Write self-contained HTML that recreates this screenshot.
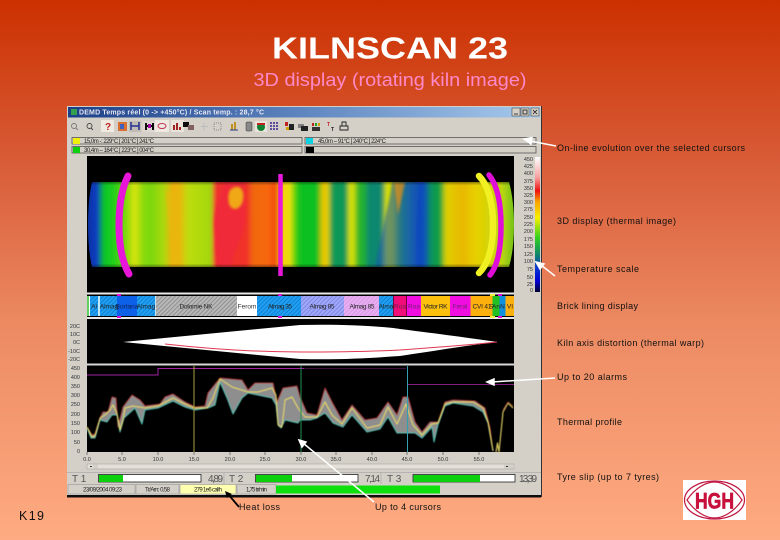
<!DOCTYPE html>
<html><head><meta charset="utf-8"><title>KILNSCAN 23</title>
<style>
html,body{margin:0;padding:0;width:780px;height:540px;overflow:hidden;background:#e8764e}
svg{display:block}
text{font-family:"Liberation Sans",sans-serif}
.lb{font-size:9px;fill:#111}
.ax{font-size:5.5px;fill:#333}
.st{font-size:6px;fill:#222}
.big{font-size:10px;fill:#555}
</style></head><body>
<svg width="780" height="540" viewBox="0 0 780 540" xmlns="http://www.w3.org/2000/svg">
<defs>
<linearGradient id="bg" x1="0" y1="0" x2="0" y2="1"><stop offset="0" stop-color="#cc3000"/><stop offset=".3" stop-color="#d85c38"/><stop offset=".6" stop-color="#ec8a62"/><stop offset="1" stop-color="#ffab82"/></linearGradient>
<linearGradient id="tb" x1="0" y1="0" x2="1" y2="0"><stop offset="0" stop-color="#1c3f88"/><stop offset=".5" stop-color="#5f86c0"/><stop offset="1" stop-color="#a8cbec"/></linearGradient>
<linearGradient id="kiln" x1="87" y1="0" x2="514" y2="0" gradientUnits="userSpaceOnUse">
<stop offset="0" stop-color="#0830a0"/><stop offset=".026" stop-color="#0840c8"/><stop offset=".033" stop-color="#08a040"/><stop offset=".042" stop-color="#08c828"/><stop offset=".066" stop-color="#28d018"/><stop offset=".096" stop-color="#90dc08"/><stop offset=".112" stop-color="#e0e408"/><stop offset=".129" stop-color="#90dc08"/><stop offset=".148" stop-color="#78d808"/><stop offset=".183" stop-color="#b0d808"/><stop offset=".199" stop-color="#f0b008"/><stop offset=".218" stop-color="#e8b808"/><stop offset=".234" stop-color="#c0dc08"/><stop offset=".293" stop-color="#a0d808"/><stop offset=".297" stop-color="#f03030"/><stop offset=".377" stop-color="#f03028"/><stop offset=".386" stop-color="#f06810"/><stop offset=".424" stop-color="#f86808"/><stop offset=".443" stop-color="#f04808"/><stop offset=".452" stop-color="#f0c808"/><stop offset=".475" stop-color="#f0e010"/><stop offset=".489" stop-color="#40d010"/><stop offset=".499" stop-color="#10c020"/><stop offset=".541" stop-color="#10c020"/><stop offset=".550" stop-color="#e8c000"/><stop offset=".564" stop-color="#e8d000"/><stop offset=".574" stop-color="#109858"/><stop offset=".607" stop-color="#109858"/><stop offset=".614" stop-color="#d8e000"/><stop offset=".623" stop-color="#d8e000"/><stop offset=".637" stop-color="#20b030"/><stop offset=".651" stop-color="#20b030"/><stop offset=".658" stop-color="#108870"/><stop offset=".691" stop-color="#108870"/><stop offset=".700" stop-color="#d8e000"/><stop offset=".716" stop-color="#d8d800"/><stop offset=".733" stop-color="#30a050"/><stop offset=".756" stop-color="#2070a0"/><stop offset=".773" stop-color="#1048c0"/><stop offset=".792" stop-color="#1050b8"/><stop offset=".803" stop-color="#109060"/><stop offset=".827" stop-color="#10a040"/><stop offset=".84" stop-color="#e0d000"/><stop offset=".88" stop-color="#e8b800"/><stop offset=".91" stop-color="#e8d000"/><stop offset=".97" stop-color="#c0d810"/><stop offset="1" stop-color="#70c018"/>
</linearGradient>
<linearGradient id="shade" x1="0" y1="0" x2="0" y2="1"><stop offset="0" stop-color="#000" stop-opacity=".4"/><stop offset=".04" stop-color="#000" stop-opacity="0"/><stop offset=".96" stop-color="#000" stop-opacity="0"/><stop offset="1" stop-color="#000" stop-opacity=".4"/></linearGradient>
<linearGradient id="scale" x1="0" y1="0" x2="0" y2="1"><stop offset="0" stop-color="#fff"/><stop offset=".15" stop-color="#f8a0a0"/><stop offset=".25" stop-color="#f01010"/><stop offset=".33" stop-color="#f8a000"/><stop offset=".45" stop-color="#f8f000"/><stop offset=".6" stop-color="#30d020"/><stop offset=".72" stop-color="#108868"/><stop offset=".82" stop-color="#0838d0"/><stop offset=".92" stop-color="#0000d0"/><stop offset="1" stop-color="#000030"/></linearGradient>
<pattern id="h1" width="3" height="3" patternUnits="userSpaceOnUse" patternTransform="rotate(45)"><rect width="3" height="3" fill="#20a0f0"/><rect width="1" height="3" fill="#1080d8"/></pattern>
<pattern id="h2" width="3" height="3" patternUnits="userSpaceOnUse" patternTransform="rotate(45)"><rect width="3" height="3" fill="#a0a8f8"/><rect width="1" height="3" fill="#8088e8"/></pattern>
<pattern id="h3" width="3" height="3" patternUnits="userSpaceOnUse" patternTransform="rotate(45)"><rect width="3" height="3" fill="#e8b0f0"/><rect width="1" height="3" fill="#d898e8"/></pattern>
<pattern id="h4" width="3" height="3" patternUnits="userSpaceOnUse" patternTransform="rotate(45)"><rect width="3" height="3" fill="#b8b8b8"/><rect width="1" height="3" fill="#909090"/></pattern>
<filter id="b2" x="-20%" y="-20%" width="140%" height="140%"><feGaussianBlur stdDeviation="1.2"/></filter>
<filter id="bk" x="-2%" y="-2%" width="104%" height="104%"><feGaussianBlur stdDeviation="2 0"/></filter>
<filter id="b1" x="-2%" y="-2%" width="104%" height="104%"><feGaussianBlur stdDeviation=".35"/></filter>
<filter id="b3" x="-2%" y="-10%" width="104%" height="120%"><feGaussianBlur stdDeviation=".5"/></filter>
<clipPath id="kc"><path d="M92 182H509Q514 200 514 225Q514 250 509 267H92Q88 250 88 225Q88 200 92 182Z"/></clipPath>
</defs>
<rect width="780" height="540" fill="url(#bg)"/>

<text x="272" y="58.500" font-size="30.500" font-weight="700" fill="#fff" textLength="236" lengthAdjust="spacingAndGlyphs">KILNSCAN 23</text>
<text x="253.500" y="86" font-size="18.500" fill="#ff88c8" textLength="273" lengthAdjust="spacingAndGlyphs">3D display (rotating kiln image)</text>

<g filter="url(#b1)">
<rect x="67" y="106" width="474" height="391" fill="#d4d0c8"/>
<rect x="67" y="495" width="474" height="2.500" fill="#111"/>
<rect x="541" y="106" width="1" height="391" fill="#333"/>
<rect x="68" y="107" width="472" height="10.500" fill="url(#tb)"/>
<rect x="71" y="109" width="6" height="6" fill="#30a050"/>
<text x="79" y="114.500" font-size="7" font-weight="700" fill="#e8e8f0" textLength="185">DEMD Temps réel (0 -&gt; +450°C) / Scan temp. : 28,7 °C</text>
<g fill="#d4d0c8" stroke="#333" stroke-width=".5"><rect x="512" y="108" width="8" height="8"/><rect x="521" y="108" width="8" height="8"/><rect x="531" y="108" width="8" height="8"/></g>
<path d="M514 114h4M523 110h4v4h-4zM533 110l4 4M537 110l-4 4" stroke="#111" fill="none" stroke-width=".8"/>

<!-- toolbar -->
<g fill="none" stroke="#777" stroke-width=".9"><circle cx="74" cy="126" r="2.500"/><path d="M76 128l2 2"/><circle cx="89.500" cy="126" r="2.500" stroke="#444"/><path d="M91 128l2 2" stroke="#444"/></g>
<rect x="101" y="120" width="13" height="12" fill="#eeeae2"/><text x="105" y="130" font-size="10" font-weight="700" fill="#c02020">?</text>
<rect x="118" y="122" width="9" height="9" fill="#d87030"/><rect x="120" y="124" width="4" height="5" fill="#4060c0"/>
<rect x="129" y="121" width="12" height="11" fill="#c0bcb4"/><path d="M131 122v8M139 122v8M131 126h8" stroke="#203090" stroke-width="1.500"/>
<rect x="143" y="121" width="13" height="11" fill="#dcd8d0"/><path d="M146 123v7M153 123v7M146 126h7" stroke="#101010" stroke-width="2"/><rect x="148" y="124" width="3" height="4" fill="#a000a0"/>
<rect x="155" y="120" width="14" height="12" fill="#eeeae2"/><ellipse cx="162" cy="126" rx="4" ry="2.500" fill="none" stroke="#c03050"/>
<rect x="171" y="120" width="13" height="12" fill="#e8e4dc"/><path d="M173 130v-5h2v5zM176 130v-7h2v7zM179 130v-3h2v3z" fill="#a02020"/>
<rect x="183" y="122" width="6" height="5" fill="#101010"/><rect x="188" y="125" width="6" height="5" fill="#806060"/>
<path d="M204 123v7M201 126.500h7" stroke="#bbb" fill="none"/>
<rect x="214" y="123" width="7" height="7" fill="none" stroke="#888" stroke-dasharray="1 1"/>
<path d="M231 130v-6h2v6zM234 130v-8h2v8z" fill="#c09020"/><path d="M230 130h8" stroke="#204090"/>
<rect x="246" y="122" width="6" height="9" rx="1" fill="#888" stroke="#333" stroke-width=".5"/>
<rect x="255" y="121" width="12" height="11" fill="#e8e4dc"/><circle cx="261" cy="127" r="4" fill="#108030"/><path d="M257 124h8" stroke="#c02020" stroke-width="2"/>
<path d="M270 123h9M270 126h9M270 129h9" stroke="#302090" stroke-width="1.500" stroke-dasharray="2 1"/>
<rect x="285" y="122" width="3" height="4" fill="#c02020"/><rect x="289" y="124" width="5" height="6" fill="#202020"/><rect x="286" y="127" width="3" height="3" fill="#d0a000"/>
<rect x="298" y="124" width="6" height="4" fill="#808080"/><rect x="301" y="126" width="7" height="5" fill="#202020"/>
<rect x="312" y="123" width="2" height="3" fill="#c02020"/><rect x="315" y="123" width="2" height="3" fill="#20a020"/><rect x="318" y="123" width="2" height="3" fill="#d0a000"/><rect x="312" y="127" width="8" height="4" fill="#333"/>
<text x="327" y="126" font-size="5" font-weight="700" fill="#c02020">T</text><text x="331" y="131" font-size="5" font-weight="700" fill="#222">T</text>
<path d="M340 130v-4h8v4zM342 126v-4h4v4z" fill="none" stroke="#222" stroke-width=".9"/>

<!-- legends -->
<g fill="#d4d0c8" stroke="#555" stroke-width=".8"><rect x="72" y="137.500" width="230" height="6.500"/><rect x="72" y="146.500" width="230" height="6.500"/><rect x="305" y="137.500" width="231" height="6.500"/><rect x="305" y="146.500" width="231" height="6.500"/></g>
<rect x="73" y="138" width="7" height="6" fill="#f0f010"/><rect x="73" y="147" width="7" height="6" fill="#10d010"/><rect x="306" y="138" width="7" height="6" fill="#10d0e0"/><rect x="306" y="147" width="8" height="6" fill="#000"/>
<text x="84" y="143" class="st" textLength="70">15,0m -: 229°C [ 201°C ] 241°C</text>
<text x="84" y="152" class="st" textLength="70">30,4m -- 164°C [ 223°C ] 004°C</text>
<text x="318" y="143" class="st" textLength="68">45,0m -- 91°C [ 240°C ] 224°C</text>

<!-- black panels -->
<rect x="87" y="156" width="427" height="296" fill="#000"/>

<!-- kiln -->
<g clip-path="url(#kc)">
<rect x="70" y="170" width="460" height="110" fill="url(#kiln)" filter="url(#bk)"/>
<path d="M225 182C218 200 212 215 215 235C215 250 216 260 218 267H232C232 258 236 250 240 240C246 225 248 205 243 182Z" fill="#f02c38" filter="url(#b2)"/>
<path d="M230 190C238 183 245 188 243 200C241 210 232 212 229 204C228 198 228 194 230 190Z" fill="#f0a818" filter="url(#b2)"/>
<path d="M165 190C172 195 180 190 183 190L178 225L183 265H172L170 230Z" fill="#e8b808" opacity=".55" filter="url(#b2)"/>
<path d="M392 182C390 200 385 215 375 267H412C414 240 418 205 420 182Z" fill="#1858b0" opacity=".55" filter="url(#b2)"/>
<path d="M394 182H405L398 215Z" fill="#f09010" opacity=".7" filter="url(#b2)"/>
<rect x="87" y="182" width="427" height="85" fill="url(#shade)"/>
</g>
<path d="M128 176C121 190 119 208 119 225C119 242 121 260 129 274" stroke="#e814d8" stroke-width="7" fill="none" stroke-linecap="round"/>
<path d="M280.500 174V276" stroke="#e814d8" stroke-width="4.500" fill="none"/>
<path d="M479 176C489 186 493 205 493 225C493 245 489 263 479 273" stroke="#f0f020" stroke-width="6.500" fill="none" stroke-linecap="round"/>
<path d="M489 175C498 186 501 205 501 226C501 247 498 265 490 275" stroke="#e010d8" stroke-width="5.500" fill="none" stroke-linecap="round"/>

<!-- scale -->
<rect x="535" y="157" width="5" height="135" fill="url(#scale)"/>
<g class="ax" text-anchor="end"><text x="533" y="161">450</text><text x="533" y="168">425</text><text x="533" y="175">400</text><text x="533" y="183">375</text><text x="533" y="190">350</text><text x="533" y="197">325</text><text x="533" y="204">300</text><text x="533" y="211">275</text><text x="533" y="219">250</text><text x="533" y="226">225</text><text x="533" y="233">200</text><text x="533" y="241">175</text><text x="533" y="248">150</text><text x="533" y="256">125</text><text x="533" y="263">100</text><text x="533" y="271">75</text><text x="533" y="279">50</text><text x="533" y="286">25</text><text x="533" y="292">0</text></g>

<!-- bricks -->
<rect x="87" y="292.500" width="427" height="2" fill="#e8e8e8"/>
<rect x="87" y="317" width="427" height="2" fill="#e8e8e8"/>
<g>
<rect x="87" y="296" width="2" height="20" fill="#60d060"/><rect x="89" y="296" width="1" height="20" fill="#fff"/>
<rect x="90" y="296" width="8" height="20" fill="url(#h1)"/><rect x="98" y="296" width="2" height="20" fill="#c0e8f8"/>
<rect x="100" y="296" width="17" height="20" fill="url(#h1)"/><rect x="117" y="296" width="20" height="20" fill="#1060e8"/>
<rect x="137" y="296" width="18" height="20" fill="url(#h1)"/><rect x="155" y="296" width="1" height="20" fill="#c0e8f8"/>
<rect x="156" y="296" width="81" height="20" fill="url(#h4)"/><rect x="237" y="296" width="20" height="20" fill="#fff"/>
<rect x="257" y="296" width="44" height="20" fill="url(#h1)"/><rect x="301" y="296" width="43" height="20" fill="url(#h2)"/>
<rect x="344" y="296" width="35" height="20" fill="url(#h3)"/><rect x="379" y="296" width="14" height="20" fill="url(#h1)"/>
<rect x="393.500" y="296" width="13" height="20" fill="#f00878"/><rect x="407" y="296" width="14" height="20" fill="#f010e0"/>
<rect x="421" y="296" width="29" height="20" fill="#fcc010"/><rect x="450" y="296" width="20.500" height="20" fill="#f010e0"/>
<rect x="470.500" y="296" width="22" height="20" fill="#fcb010"/><rect x="492.500" y="296" width="7" height="20" fill="#20c020"/>
<rect x="499.500" y="296" width="6" height="20" fill="#1090e0"/><rect x="505.500" y="296" width="8.500" height="20" fill="#fcb010"/>
<rect x="490" y="294" width="5" height="2" fill="#f0f040"/><rect x="490" y="316" width="5" height="2" fill="#f0f040"/>
<rect x="498" y="294" width="4" height="2" fill="#e010d8"/><rect x="498" y="316" width="4" height="2" fill="#e010d8"/>
<rect x="117" y="294" width="4" height="2" fill="#e010d8"/><rect x="117" y="316" width="4" height="2" fill="#e010d8"/>
<rect x="278" y="294" width="4" height="2" fill="#e010d8"/><rect x="278" y="316" width="4" height="2" fill="#e010d8"/>
</g>
<g font-size="6.500" fill="#222" text-anchor="middle">
<text x="94" y="308.500">Al</text><text x="109" y="308.500">Almag</text><text x="127" y="308.500" fill="#102050">Bortana</text><text x="146" y="308.500">Almag</text><text x="196" y="308.500" textLength="33">Dolomie NK</text><text x="247" y="308.500" fill="#333">Ferom</text><text x="280" y="308.500" textLength="24">Almag 35</text><text x="322" y="308.500" textLength="25">Almag 85</text><text x="362" y="308.500" textLength="25">Almag 85</text><text x="386" y="308.500">Alma</text><text x="400" y="308.500" fill="#702050">Roa</text><text x="414" y="308.500" fill="#702070">Roa</text><text x="435.500" y="308.500" textLength="24">Victor RK</text><text x="460" y="308.500" fill="#702070">Feral</text><text x="482" y="308.500" textLength="19">CVI 41</text><text x="491" y="308.500">S</text><text x="496" y="308.500">An</text><text x="502.500" y="308.500">N</text><text x="510" y="308.500">VI</text>
</g>

<!-- distortion -->
<path d="M123 342L300 325C340 324 380 326 400 329C440 334 470 338 497 342C470 345 440 350 400 356C370 358 340 360 300 359L123 342Z" fill="#fff"/>
<path d="M165 344C210 349 260 352 300 352C340 352 380 351 400 350C440 347 470 345 497 342" fill="none" stroke="#e03850" stroke-width="1"/>
<rect x="87" y="363.500" width="427" height="2" fill="#d8d8d8"/>
<g class="ax" text-anchor="end"><text x="80" y="328">20C</text><text x="80" y="336">10C</text><text x="80" y="344">0C</text><text x="80" y="353">-10C</text><text x="80" y="361">-20C</text>
<text x="80" y="370">450</text><text x="80" y="379">400</text><text x="80" y="388">350</text><text x="80" y="397">300</text><text x="80" y="406">250</text><text x="80" y="416">200</text><text x="80" y="425">150</text><text x="80" y="434">100</text><text x="80" y="444">50</text><text x="80" y="453">0</text></g>

<!-- alarms -->
<path d="M87 375H158V368.500H304" fill="none" stroke="#a020a0" stroke-width="1"/>
<path d="M304 368.500H406" fill="none" stroke="#401040" stroke-width="1"/>
<path d="M408 384.500H514" fill="none" stroke="#802080" stroke-width="1"/>

<!-- profile band -->
<g filter="url(#b3)" stroke-linejoin="round">
<path d="M87 427L92 435L95 434L100 418L103 412L108 412L112 397L116 398L118 427L123 407L132 395L140 400L145 406L160 404L165 397L173 394L185 402L195 407L205 406L208 393L220 378L242 380L248 390L255 383L273 383L277 402L283 388L297 386L300 397L307 413L317 415L325 388L332 402L342 420L352 405L365 420L377 418L388 402L397 415L403 397L408 397L415 422L422 432L430 422L438 422L445 402L453 400L475 401L485 408L490 428L493 451L488 423L483 412L473 406L453 403L445 406L438 425L434 442L432 427L422 438L415 433L397 433L388 417L380 429L367 432L352 415L343 427L333 423L325 413L317 418L310 420L300 420L298 423L285 420L281 428L278 425L276 405L272 398L248 393L242 398L233 414L227 398L220 382L215 405L208 408L195 410L185 407L173 401L158 408L145 410L142 424L135 408L124 418L120 432L117 415L112 415L107 422L100 420L95 438L91 438L87 428Z" fill="#8e8e8e"/>
<path d="M87 427L92 435L95 434L100 418L103 412L108 412L112 397L116 398L118 427L123 407L132 395L140 400L145 406L160 404L165 397L173 394L185 402L195 407L205 406L208 393L220 378L242 380L248 390L255 383L273 383L277 402L283 388L297 386L300 397L307 413L317 415L325 388L332 402L342 420L352 405L365 420L377 418L388 402L397 415L403 397L408 397L415 422L422 432L430 422L438 422L445 402L453 400L475 401L485 408L490 428L493 451" fill="none" stroke="#b03838" stroke-width="1"/>
<path d="M87 428L91 438L95 438L100 420L107 422L112 415L117 415L120 432L124 418L135 408L142 424L145 410L158 408L173 401L185 407L195 410L208 408L215 405L220 382L227 398L233 414L242 398L248 393L272 398L276 405L278 425L281 428L285 420L298 423L300 420L310 420L317 418L325 413L333 423L343 427L352 415L367 432L380 429L388 417L397 433L415 433L422 438L432 427L434 442L438 425L445 406L453 403L473 406L483 412L488 423L493 451" fill="none" stroke="#50c0b0" stroke-width="1"/>
<path d="M87 427L92 437L95 436L100 418L105 415L110 410L113 405L117 413L120 430L123 420L125 408L133 406L145 408L158 406L173 398L185 404L195 408L207 408L213 398L220 379L232 387L248 392L258 392L272 388L276 395L278 425L282 427L285 400L292 397L298 408L305 417L317 417L325 402L332 415L342 424L352 408L367 428L380 425L388 407L397 424L406 404L413 425L422 435L432 424L438 423L445 404L453 402L473 402L483 408L488 422L493 451" fill="none" stroke="#e8d860" stroke-width="1"/>
<path d="M496 452L497.500 443L499 452L503 412L508 403L513 408" fill="none" stroke="#d8c860" stroke-width="1.200"/>
<path d="M503 410L508 402L513 406" fill="none" stroke="#b03838" stroke-width=".8"/>
</g>
<path d="M194 366V452" stroke="#a8a040" stroke-width="1"/>
<path d="M301 366V452" stroke="#209050" stroke-width="1"/>
<path d="M407.500 366V452" stroke="#30a0b0" stroke-width="1"/>

<!-- x axis -->
<path d="M87 452v3M122 452v3M158 452v3M194 452v3M230 452v3M265 452v3M301 452v3M336 452v3M372 452v3M407 452v3M443 452v3M479 452v3" stroke="#555" stroke-width=".7"/>
<g class="ax" text-anchor="middle"><text x="87" y="461">0.0</text><text x="122" y="461">5.0</text><text x="158" y="461">10.0</text><text x="194" y="461">15.0</text><text x="230" y="461">20.0</text><text x="265" y="461">25.0</text><text x="301" y="461">30.0</text><text x="336" y="461">35.0</text><text x="372" y="461">40.0</text><text x="407" y="461">45.0</text><text x="443" y="461">50.0</text><text x="479" y="461">55.0</text></g>

<!-- scrollbar -->
<rect x="87" y="464" width="427" height="5" fill="#e4e0d8" stroke="#999" stroke-width=".5"/>
<rect x="93" y="464.500" width="5" height="4" fill="#d4d0c8"/><rect x="504" y="464.500" width="10" height="4" fill="#d4d0c8"/>
<path d="M90 466.500h2M506 466.500h2" stroke="#333"/>

<!-- bars -->
<path d="M67 472.500H541M224 473V484M381 473V484" stroke="#aaa" stroke-width=".7"/>
<text x="72" y="482" class="big">T 1</text>
<rect x="98.500" y="474.500" width="102.500" height="7.500" fill="#fff" stroke="#222" stroke-width=".8"/><rect x="99" y="475" width="24" height="7" fill="#10d010"/>
<text x="208" y="482" class="big" textLength="15">4,89</text>
<text x="229" y="482" class="big">T 2</text>
<rect x="255.500" y="474.500" width="102.500" height="7.500" fill="#fff" stroke="#222" stroke-width=".8"/><rect x="256" y="475" width="36" height="7" fill="#10d010"/>
<text x="365" y="482" class="big" textLength="15">7,14</text>
<text x="387" y="482" class="big">T 3</text>
<rect x="413" y="474.500" width="102" height="7.500" fill="#fff" stroke="#222" stroke-width=".8"/><rect x="413.500" y="475" width="66.500" height="7" fill="#10d010"/>
<text x="519" y="482" class="big" textLength="18">13,39</text>

<!-- status -->
<g fill="#d4d0c8" stroke="#999" stroke-width=".6"><rect x="68" y="484.500" width="67" height="9.500"/><rect x="136" y="484.500" width="43" height="9.500"/><rect x="180" y="484.500" width="56" height="9.500" fill="#ffffb0"/><rect x="237" y="484.500" width="39" height="9.500"/></g>
<rect x="276" y="485.500" width="164" height="8" fill="#10e010"/>
<text x="83" y="491.500" class="st" textLength="39">23/09/2004 09:23</text>
<text x="145" y="491.500" class="st" textLength="25">Tr/Arn: 0.58</text>
<text x="194" y="491.500" class="st" textLength="28">279 1e6 cal/h</text>
<text x="246" y="491.500" class="st" textLength="21">1,75 tr/min</text>
</g>

<!-- annotations -->
<g fill="#fff" stroke="#fff" stroke-width="1.500">
<path d="M556 146L530 141" fill="none"/><path d="M524 139L532 137.500L531 144Z"/>
<path d="M555 276L541 265" fill="none"/><path d="M536 262L544 264L540 269Z"/>
<path d="M555 378L492 382" fill="none"/><path d="M487 382L494 379L494 385Z"/>
<path d="M374 502L303 443" fill="none"/><path d="M299 440L306 442L302 447Z"/>
</g>
<path d="M239 507L228 494" stroke="#000" stroke-width="1.800"/><path d="M225 491L232 494L227 498Z" fill="#000"/>

<g class="lb">
<text x="557" y="151" textLength="188">On-line evolution over the selected cursors</text>
<text x="557" y="224" textLength="119">3D display (thermal image)</text>
<text x="557" y="272" textLength="82">Temperature scale</text>
<text x="557" y="309" textLength="81">Brick lining display</text>
<text x="557" y="346" textLength="147">Kiln axis distortion (thermal warp)</text>
<text x="557" y="380" textLength="70">Up to 20 alarms</text>
<text x="557" y="425" textLength="65">Thermal profile</text>
<text x="557" y="480" textLength="102">Tyre slip (up to 7 tyres)</text>
<text x="239" y="510" textLength="41">Heat loss</text>
<text x="375" y="510" textLength="66">Up to 4 cursors</text>
</g>
<text x="19" y="520" font-size="12.500" fill="#111" textLength="25">K19</text>

<!-- logo -->
<rect x="683" y="480" width="63" height="40" fill="#fff"/>
<ellipse cx="714.500" cy="500" rx="30" ry="19" fill="none" stroke="#c01840" stroke-width="1.200"/>
<path d="M687 500C695 488 706 482 714.500 482C723 482 734 488 742 500C734 512 723 518 714.500 518C706 518 695 512 687 500Z" fill="none" stroke="#c01840" stroke-width="1.200"/>
<text x="714.500" y="508.500" font-size="22" font-weight="700" fill="#c8103c" text-anchor="middle" stroke="#c8103c" stroke-width=".7" textLength="39" lengthAdjust="spacingAndGlyphs">HGH</text>
</svg>
</body></html>
